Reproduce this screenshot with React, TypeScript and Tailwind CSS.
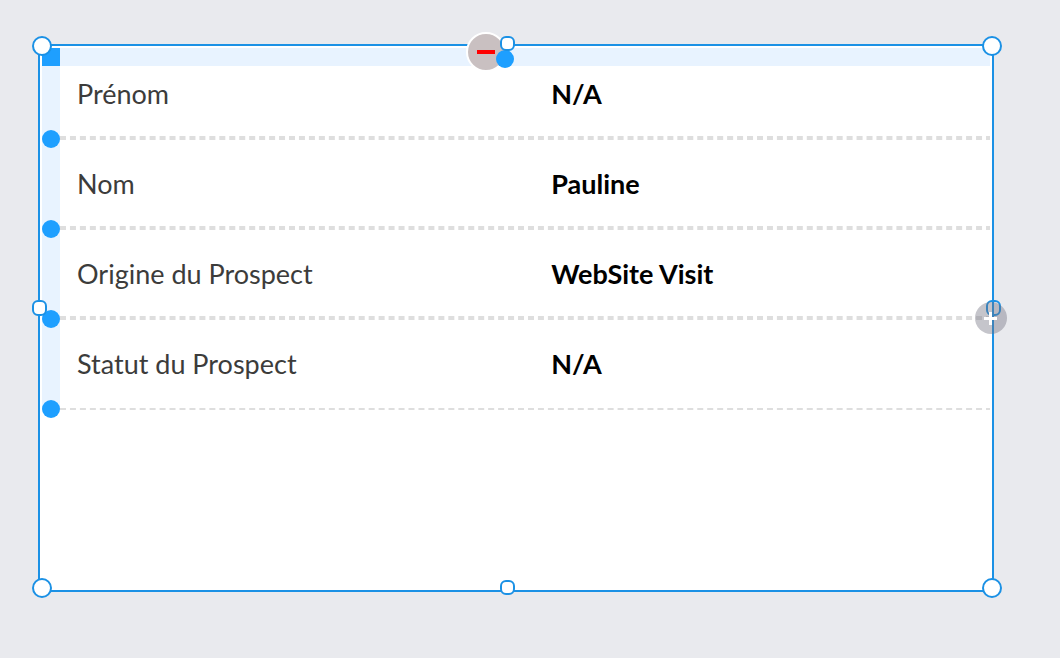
import React from "react";
import clsx from "clsx";

interface Field {
  label: string;
  value: string;
}

const fields: Field[] = [
  { label: "Prénom", value: "N/A" },
  { label: "Nom", value: "Pauline" },
  { label: "Origine du Prospect", value: "WebSite Visit" },
  { label: "Statut du Prospect", value: "N/A" },
];

const corners = [
  { name: "top left", position: "-left-2 -top-2.5" },
  { name: "top right", position: "-right-2.5 -top-2.5" },
  { name: "bottom left", position: "-left-2 -bottom-2" },
  { name: "bottom right", position: "-right-2.5 -bottom-2" },
];

const edges = [
  { name: "top", position: "left-1/2 -top-2.5 -ml-4 size-[15px]" },
  { name: "bottom", position: "left-1/2 -bottom-[5px] -ml-4 size-[15px]" },
  { name: "left", position: "-left-2 top-1/2 -mt-[18px] h-4 w-[15px]" },
];

const edgeStyle = "absolute rounded-md border-2 border-[#1b91e5]";

// Left rail, one grab point on each row border
const RowRail: React.FC = () => (
  <div className="w-[18px] shrink-0 self-start bg-[#e8f3ff]">
    {fields.map((field, index) => (
      <div
        key={field.label}
        className={clsx("relative", index === 0 ? "h-[72px]" : "h-[90px]")}
      >
        <button
          type="button"
          aria-label={`Select row ${field.label}`}
          className="absolute -bottom-2.5 left-0 size-[18px] rounded-full bg-[#1e9fff]"
        />
      </div>
    ))}
  </div>
);

const FieldTable: React.FC = () => (
  <div className="min-w-0 flex-1 overflow-hidden">
    <table className="block w-[calc(100%+2px)] text-[27px] leading-8">
      <tbody className="block">
        {fields.map((field, index) => (
          <tr
            key={field.label}
            className={clsx(
              "flex border-dashed border-[#dedede]",
              index === 0 ? "border-b-2 pt-3 pb-[26px]" : "border-y-2 pt-7",
              index > 0 && index < fields.length - 1 && "pb-[26px]",
              index === fields.length - 1 && "pb-7",
            )}
          >
            <th
              scope="row"
              className="w-[51%] pl-[17px] text-left font-normal text-[#3c3c3b]"
            >
              {field.label}
            </th>
            <td className="flex-1 pl-4 font-bold text-black">{field.value}</td>
          </tr>
        ))}
      </tbody>
    </table>
  </div>
);

const App: React.FC = () => {
  return (
    <main className="flex min-h-screen bg-[#e9eaee] pt-11 pr-[66px] pb-[66px] pl-[38px] font-['Lato',sans-serif]">
      <section className="relative flex-1 border-2 border-[#1b91e5] bg-white p-0.5">
        <div className="bg-[#e8f3ff]">
          <button
            type="button"
            aria-label="Select table"
            className="block size-[18px] bg-[#1e9fff]"
          />
        </div>
        <div className="flex">
          <RowRail />
          <FieldTable />
        </div>

        {/* Column controls */}
        <button
          type="button"
          aria-label="Remove column"
          className="absolute -top-3.5 left-1/2 -ml-[50px] flex size-10 items-center justify-center rounded-full border-2 border-white bg-[#c9c0c1]"
        >
          <span className="h-1 w-[18px] bg-[#ff0000]" />
        </button>
        <button
          type="button"
          aria-label="Select column"
          className="absolute top-1 left-1/2 -ml-5 size-[18px] rounded-full bg-[#1e9fff]"
        />

        {/* Resize handles */}
        {corners.map((corner) => (
          <button
            key={corner.name}
            type="button"
            aria-label={`Resize ${corner.name}`}
            className={clsx(
              "absolute size-5 rounded-full border-2 border-[#1b91e5] bg-white",
              corner.position,
            )}
          />
        ))}
        {edges.map((edge) => (
          <button
            key={edge.name}
            type="button"
            aria-label={`Resize ${edge.name}`}
            className={clsx(edgeStyle, "bg-white", edge.position)}
          />
        ))}
        <button
          type="button"
          aria-label="Resize right"
          className={clsx(
            edgeStyle,
            "top-1/2 -right-[9px] -mt-[18px] h-4 w-[15px]",
          )}
        />

        <button
          type="button"
          aria-label="Add row"
          className="absolute top-64 -right-[15px] flex size-8 items-center justify-center rounded-full bg-[#6e6e7d]/40"
        >
          <svg width="14" height="14" viewBox="0 0 14 14" aria-hidden="true">
            <path d="M6.5 1v13M0 7.5h13" stroke="#fff" strokeWidth="3" />
          </svg>
        </button>
      </section>
    </main>
  );
};

export default App;
